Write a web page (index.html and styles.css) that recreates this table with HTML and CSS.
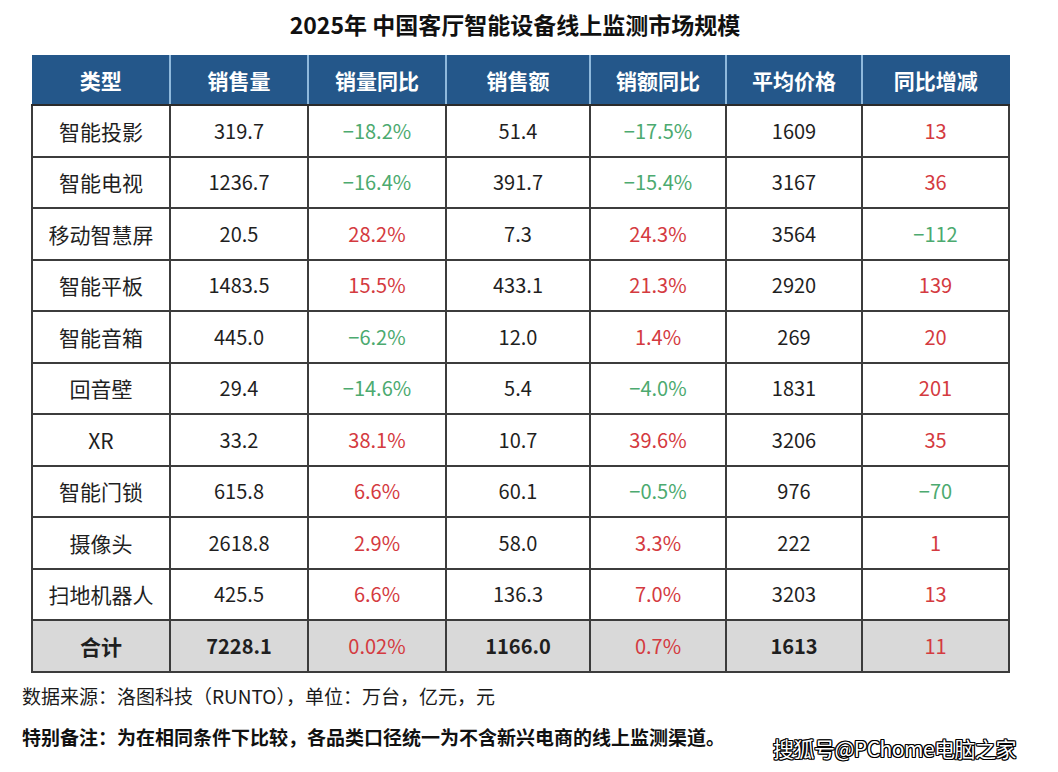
FILE: index.html
```html
<!DOCTYPE html>
<html lang="zh-CN">
<head>
<meta charset="utf-8">
<title>2025年 中国客厅智能设备线上监测市场规模</title>
<link rel="stylesheet" href="styles.css">
</head>
<body>
<div class="page">
  <h1 class="title">2025年 中国客厅智能设备线上监测市场规模</h1>
  <table class="grid">
    <colgroup>
      <col class="c1"><col class="c2"><col class="c3"><col class="c4"><col class="c5"><col class="c6"><col class="c7">
    </colgroup>
    <thead>
      <tr><th>类型</th><th>销售量</th><th>销量同比</th><th>销售额</th><th>销额同比</th><th>平均价格</th><th>同比增减</th></tr>
    </thead>
    <tbody>
      <tr><td>智能投影</td><td>319.7</td><td class="g">−18.2%</td><td>51.4</td><td class="g">−17.5%</td><td>1609</td><td class="r">13</td></tr>
      <tr><td>智能电视</td><td>1236.7</td><td class="g">−16.4%</td><td>391.7</td><td class="g">−15.4%</td><td>3167</td><td class="r">36</td></tr>
      <tr><td>移动智慧屏</td><td>20.5</td><td class="r">28.2%</td><td>7.3</td><td class="r">24.3%</td><td>3564</td><td class="g">−112</td></tr>
      <tr><td>智能平板</td><td>1483.5</td><td class="r">15.5%</td><td>433.1</td><td class="r">21.3%</td><td>2920</td><td class="r">139</td></tr>
      <tr><td>智能音箱</td><td>445.0</td><td class="g">−6.2%</td><td>12.0</td><td class="r">1.4%</td><td>269</td><td class="r">20</td></tr>
      <tr><td>回音壁</td><td>29.4</td><td class="g">−14.6%</td><td>5.4</td><td class="g">−4.0%</td><td>1831</td><td class="r">201</td></tr>
      <tr><td>XR</td><td>33.2</td><td class="r">38.1%</td><td>10.7</td><td class="r">39.6%</td><td>3206</td><td class="r">35</td></tr>
      <tr><td>智能门锁</td><td>615.8</td><td class="r">6.6%</td><td>60.1</td><td class="g">−0.5%</td><td>976</td><td class="g">−70</td></tr>
      <tr><td>摄像头</td><td>2618.8</td><td class="r">2.9%</td><td>58.0</td><td class="r">3.3%</td><td>222</td><td class="r">1</td></tr>
      <tr><td>扫地机器人</td><td>425.5</td><td class="r">6.6%</td><td>136.3</td><td class="r">7.0%</td><td>3203</td><td class="r">13</td></tr>
      <tr class="total"><td>合计</td><td>7228.1</td><td class="r">0.02%</td><td>1166.0</td><td class="r">0.7%</td><td>1613</td><td class="r">11</td></tr>
    </tbody>
  </table>
  <p class="source">数据来源：洛图科技（RUNTO），单位：万台，亿元，元</p>
  <p class="note">特别备注：为在相同条件下比较，各品类口径统一为不含新兴电商的线上监测渠道。</p>
  <div class="watermark">搜狐号@PChome电脑之家</div>
</div>
</body>
</html>
```
FILE: styles.css
```css
html, body {
  margin: 0;
  padding: 0;
  background: #ffffff;
}
body {
  font-family: "Noto Sans CJK SC", "Noto Sans", sans-serif;
  color: #1a1a1a;
}
.page {
  position: relative;
  width: 1058px;
  height: 772px;
  overflow: hidden;
}
.title {
  margin: 0;
  padding-top: 8px;
  height: 46px;
  box-sizing: border-box;
  text-align: center;
  font-size: 23px;
  line-height: 32px;
  font-weight: 700;
  color: #111;
  padding-right: 28px;
}
.grid {
  margin-left: 31px;
  border-collapse: collapse;
  table-layout: fixed;
  width: 977px;
  margin-top: 9px;
}
.c1 { width: 138px; }
.c2 { width: 138px; }
.c3 { width: 138px; }
.c4 { width: 144px; }
.c5 { width: 136px; }
.c6 { width: 136px; }
.c7 { width: 147px; }
.grid th {
  background: #24578a;
  color: #ffffff;
  font-size: 21px;
  font-weight: 700;
  height: 49px;
  line-height: 24px;
  padding: 0;
  border-left: 2px solid #8fb9dc;
  border-right: 2px solid #8fb9dc;
  border-bottom: 2px solid #2b2b2b;
  text-align: center;
}
.grid th:first-child { border-left: 1px solid #24578a; }
.grid th:last-child { border-right: 1px solid #24578a; }
.grid td {
  height: 49.5px;
  line-height: 24px;
  padding: 0;
  border: 2px solid #3c3c3c;
  text-align: center;
  font-size: 20px;
  color: #1f1f1f;
}
.grid td:first-child { font-size: 21px; }
.grid td.g { color: #4caa6f; }
.grid td.r { color: #d43a40; }
.grid tr.total td {
  background: #d9d9d9;
  font-weight: 700;
}
.grid tr.total td.r { font-weight: 400; }
.source {
  margin: 0;
  padding: 9px 0 0 22px;
  font-size: 19px;
  line-height: 28px;
  color: #1a1a1a;
}
.note {
  margin: 0;
  padding: 13px 0 0 22px;
  font-size: 19px;
  line-height: 28px;
  font-weight: 700;
  color: #111;
}
.watermark {
  position: absolute;
  left: 773px;
  top: 734px;
  font-size: 21px;
  line-height: 28px;
  color: #ffffff;
  letter-spacing: -0.5px;
  text-shadow: 1px 1px 0 #000, -1px -1px 0 #000, 1px -1px 0 #000, -1px 1px 0 #000, 1px 0 0 #000, -1px 0 0 #000, 0 1px 0 #000, 0 -1px 0 #000;
}
```
